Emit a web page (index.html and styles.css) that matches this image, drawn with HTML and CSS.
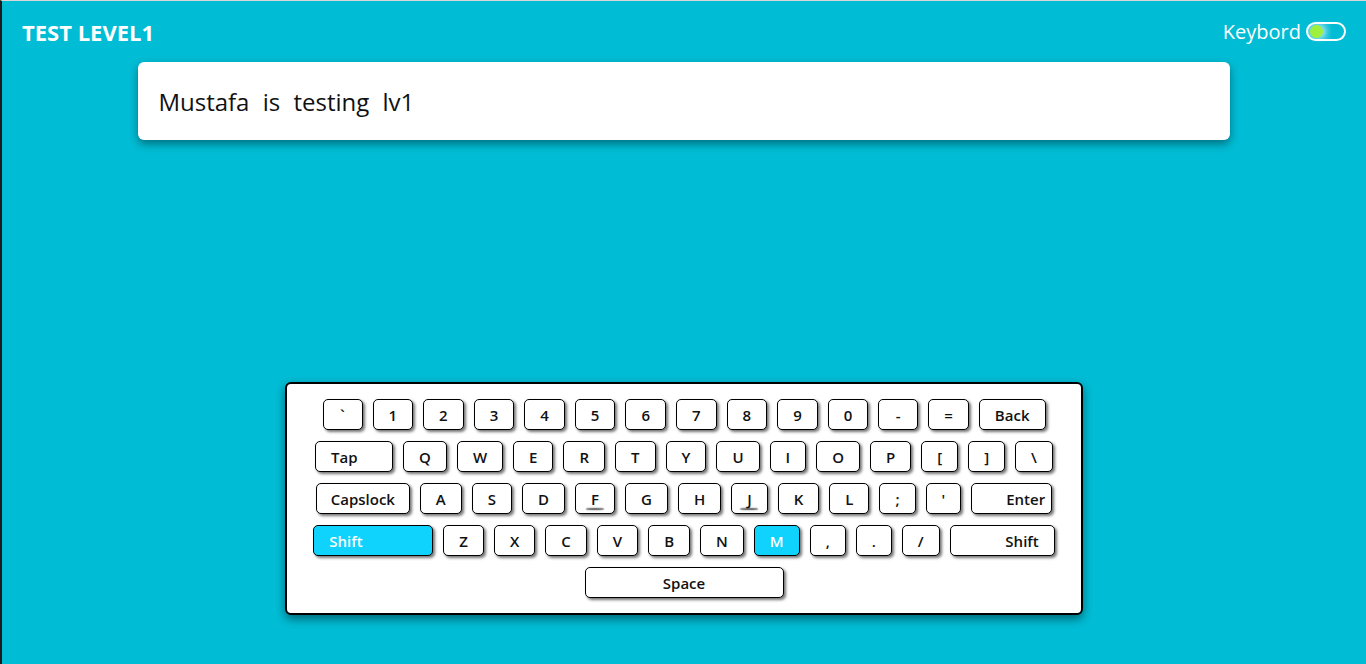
FILE: index.html
```html
<!DOCTYPE html>
<html lang="en">
<head>
<meta charset="utf-8">
<title>Test Level1</title>
<link rel="stylesheet" href="styles.css">
</head>
<body>
<div class="page">
  <header class="topbar">
    <h1 class="title">TEST LEVEL1</h1>
    <div class="toggle-wrap">
      <span class="toggle-label">Keybord</span>
      <span class="toggle"><span class="knob"></span></span>
    </div>
  </header>

  <div class="card">
    <p class="sentence">Mustafa is testing lv1</p>
  </div>

  <div class="keyboard">
    <div class="row">
      <span class="key sym">`</span><span class="key">1</span><span class="key">2</span><span class="key">3</span><span class="key">4</span><span class="key">5</span><span class="key">6</span><span class="key">7</span><span class="key">8</span><span class="key">9</span><span class="key">0</span><span class="key sym">-</span><span class="key sym">=</span><span class="key">Back</span>
    </div>
    <div class="row">
      <span class="key tab">Tap</span><span class="key">Q</span><span class="key">W</span><span class="key">E</span><span class="key">R</span><span class="key">T</span><span class="key">Y</span><span class="key">U</span><span class="key">I</span><span class="key">O</span><span class="key">P</span><span class="key">[</span><span class="key">]</span><span class="key">\</span>
    </div>
    <div class="row">
      <span class="key caps">Capslock</span><span class="key">A</span><span class="key">S</span><span class="key">D</span><span class="key home">F</span><span class="key">G</span><span class="key">H</span><span class="key home">J</span><span class="key">K</span><span class="key">L</span><span class="key">;</span><span class="key">'</span><span class="key enter">Enter</span>
    </div>
    <div class="row">
      <span class="key shift-l active">Shift</span><span class="key">Z</span><span class="key">X</span><span class="key">C</span><span class="key">V</span><span class="key">B</span><span class="key">N</span><span class="key active">M</span><span class="key">,</span><span class="key">.</span><span class="key">/</span><span class="key shift-r">Shift</span>
    </div>
    <div class="row">
      <span class="key space">Space</span>
    </div>
  </div>
</div>
</body>
</html>
```

FILE: styles.css
```css
* { box-sizing: border-box; }

html, body {
  margin: 0;
  padding: 0;
  height: 100%;
}

body {
  background: #00bcd4;
  font-family: "Open Sans", "Liberation Sans", sans-serif;
  border-top: 1px solid #d8d8d8;
  border-left: 2px solid #1c1c1c;
  overflow: hidden;
}

.page {
  display: flex;
  flex-direction: column;
}

.topbar {
  height: 61px;
  display: flex;
  align-items: center;
  justify-content: space-between;
  padding: 0 20px 0 20px;
}

.title {
  margin: 0;
  color: #fff;
  font-size: 22px;
  font-weight: 700;
  letter-spacing: 0;
}

.toggle-wrap {
  display: flex;
  align-items: center;
  gap: 5px;
}

.toggle-label {
  color: #fff;
  font-size: 20px;
}

.toggle {
  width: 40px;
  height: 19px;
  border: 2px solid #fff;
  border-radius: 10px;
  display: flex;
  align-items: center;
  padding-left: 2px;
  background: linear-gradient(90deg, rgba(255,255,255,0.35), rgba(255,255,255,0) 70%);
}

.knob {
  width: 13px;
  height: 13px;
  border-radius: 50%;
  background: #9ef03c;
  box-shadow: 3px 0 6px rgba(255,255,255,0.7);
}

.card {
  width: 80%;
  margin: 0 auto;
  height: 78px;
  background: #fff;
  border-radius: 6px;
  box-shadow: 0 4px 9px rgba(0, 0, 0, 0.4);
  display: flex;
  align-items: center;
  padding-left: 20px;
}

.sentence {
  margin: 0;
  font-size: 24px;
  color: #111;
  word-spacing: 7px;
}

.keyboard {
  width: 798px;
  margin: 242px auto 0;
  background: #fff;
  border: 2px solid #000;
  border-radius: 6px;
  box-shadow: 0 4px 10px rgba(0, 0, 0, 0.45);
  padding: 15px 0 15px;
  display: flex;
  flex-direction: column;
  gap: 11px;
}

.row {
  display: flex;
  justify-content: center;
  gap: 10px;
}

.key {
  position: relative;
  height: 31px;
  min-width: 34px;
  padding: 0 15px;
  border: 1px solid #000;
  border-radius: 5px;
  background: #fff;
  box-shadow: 2px 2px 3px rgba(0, 0, 0, 0.55);
  display: flex;
  align-items: center;
  justify-content: center;
  font-size: 15px;
  font-weight: 600;
  color: #111;
  white-space: pre;
}

.sym {
  min-width: 40px;
}

.tab {
  width: 78px;
  justify-content: flex-start;
}

.caps {
  width: 94px;
}

.enter {
  width: 81px;
  justify-content: flex-end;
  padding-right: 6px;
}

.shift-l {
  width: 120px;
  justify-content: flex-start;
}

.shift-r {
  width: 105px;
  justify-content: flex-end;
}

.space {
  width: 199px;
}

.active {
  background: #0fd3fc;
  color: #fff;
}

.home::after {
  content: "";
  position: absolute;
  left: 50%;
  bottom: 3px;
  width: 18px;
  height: 2px;
  margin-left: -9px;
  background: rgba(0, 0, 0, 0.55);
  border-radius: 50%;
  box-shadow: 0 0 2px rgba(0, 0, 0, 0.5);
}
```
